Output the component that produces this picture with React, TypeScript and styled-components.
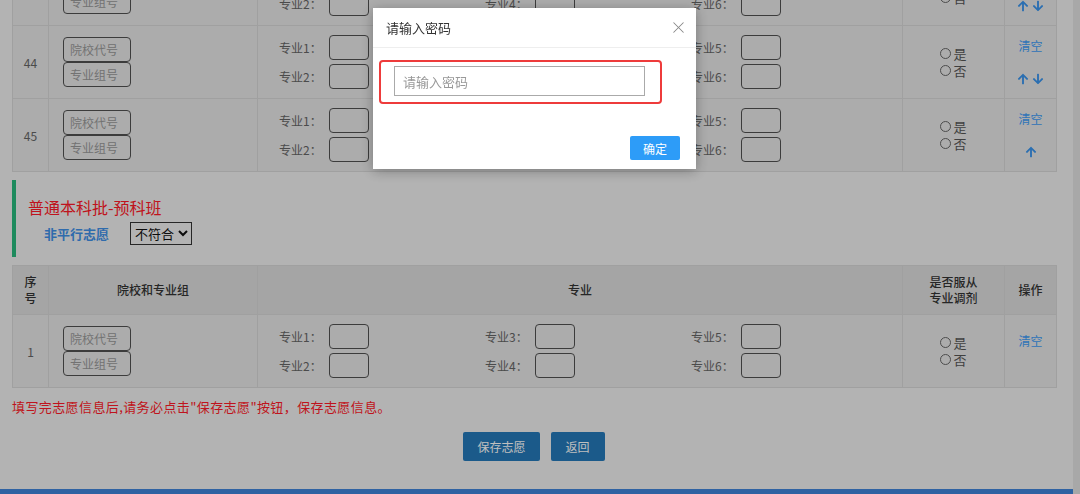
import React, { useLayoutEffect, useRef } from "react";
import styled, { createGlobalStyle } from "styled-components";
import { FaArrowUp, FaArrowDown } from "react-icons/fa";
import { X } from "lucide-react";

const GlobalStyle = createGlobalStyle`
  html, body { margin: 0; padding: 0; height: 100%; overflow: hidden; }
  body {
    font-family: "Noto Sans CJK SC", "Liberation Sans", sans-serif;
    font-size: 12px;
    color: #333;
  }
  * { box-sizing: border-box; }
`;

const Frame = styled.div`
  display: flex;
  height: 100vh;
  background: #efefef;
`;

const Viewport = styled.div`
  flex: 1;
  overflow: hidden;
`;

const ScrollTrack = styled.div`
  width: 7px;
  background: #e0e0e0;
`;

const Container = styled.div`
  padding: 0 17px 0 12px;
`;

const Table = styled.table`
  width: 100%;
  border-collapse: collapse;
  table-layout: fixed;
  background: #e6e6e6;
`;

const Th = styled.th`
  height: 49px;
  background: #dcdcdc;
  border: 1px solid #d6d6d6;
  font-size: 12px;
  line-height: 16px;
  font-weight: 500;
  color: #333;
  text-align: center;
`;

const Td = styled.td<{ $align?: "left" | "center"; $pad?: string }>`
  height: 73px;
  border: 1px solid #d6d6d6;
  text-align: ${(p) => p.$align || "center"};
  padding: ${(p) => p.$pad || "0"};
  vertical-align: middle;
  color: #646464;
  font-size: 12px;
`;

const CodeStack = styled.div`
  display: flex;
  flex-direction: column;
  width: 68px;
`;

const CodeInput = styled.input`
  display: block;
  width: 68px;
  height: 25px;
  border: 1px solid #505050;
  border-radius: 4px;
  background: transparent;
  padding: 0 6px;
  font-family: inherit;
  font-size: 12px;
  &::placeholder { color: #999; }
`;

const MajorGrid = styled.div`
  display: flex;
`;

const MajorGroup = styled.div`
  width: 206px;
  display: flex;
  flex-direction: column;
  gap: 4px;
`;

const MajorLine = styled.div`
  display: flex;
  align-items: center;
`;

const MajorLabel = styled.span`
  width: 50px;
  color: #646464;
  font-size: 12px;
`;

const MajorInput = styled.input`
  width: 40px;
  height: 25px;
  border: 1px solid #505050;
  border-radius: 4px;
  background: transparent;
`;

const RadioLine = styled.label`
  display: flex;
  justify-content: center;
  align-items: center;
  height: 17px;
  gap: 2px;
  color: #555;
  font-size: 13px;
`;

const Radio = styled.input`
  appearance: none;
  width: 11px;
  height: 11px;
  margin: 0;
  border: 1px solid #666;
  border-radius: 50%;
  background: transparent;
`;

const ClearLink = styled.a`
  display: block;
  color: #3f9cf5;
  font-size: 12px;
  line-height: 16px;
  text-decoration: none;
`;

const ArrowRow = styled.div<{ $empty?: boolean }>`
  display: flex;
  justify-content: center;
  gap: 3px;
  height: 16px;
  align-items: center;
  margin-top: ${(p) => (p.$empty ? "4px" : "17px")};
  color: #3a94ec;
`;

const SectionHead = styled.div`
  margin: 8px 0;
  border-left: 4px solid #29b87d;
  padding: 16px 0 12px 12px;
`;

const SectionTitle = styled.div`
  color: #ff1a28;
  font-size: 16px;
  line-height: 22px;
`;

const FilterRow = styled.div`
  display: flex;
  align-items: center;
  gap: 21px;
  margin-top: 4px;
  padding-left: 16px;
`;

const FilterLabel = styled.span`
  color: #3f8fe6;
  font-weight: bold;
  font-size: 13px;
`;

const FilterSelect = styled.select`
  font-family: inherit;
  font-size: 13px;
  padding: 0;
  border: 1px solid #333;
  border-radius: 0;
  background: transparent;
  color: #111;
`;

const Warning = styled.p`
  margin: 9px 0 0;
  color: #ff1a28;
  font-size: 13px;
  line-height: 20px;
  letter-spacing: 0.4px;
`;

const ButtonBar = styled.div`
  display: flex;
  justify-content: center;
  gap: 11px;
  margin: 15px 0 28px;
`;

const ActionButton = styled.button`
  height: 29px;
  min-width: 54px;
  padding: 0 14px;
  border: none;
  border-radius: 2px;
  background: #2478b8;
  color: #fff;
  font-family: inherit;
  font-size: 12px;
`;

const Footer = styled.div`
  height: 40px;
  background: #3f83d9;
`;

const Overlay = styled.div`
  position: fixed;
  inset: 0;
  background: rgba(0, 0, 0, 0.25);
`;

const Dialog = styled.div`
  position: fixed;
  left: 373px;
  top: 8px;
  width: 323px;
  background: #fff;
  box-shadow: 0 2px 12px rgba(0, 0, 0, 0.3);
`;

const DialogHead = styled.div`
  height: 40px;
  display: flex;
  align-items: center;
  justify-content: space-between;
  padding: 0 8px 0 13px;
  border-bottom: 1px solid #eee;
  font-size: 13px;
  color: #333;
`;

const CloseButton = styled.span`
  display: flex;
  color: #888;
`;

const DialogBody = styled.div`
  padding: 12px 0 0 6px;
`;

const Highlight = styled.div`
  width: 283px;
  height: 44px;
  border: 2px solid #ee3b3b;
  border-radius: 4px;
  padding: 4px 0 0 13px;
`;

const PasswordInput = styled.input`
  width: 251px;
  height: 30px;
  border: 1px solid #aaa;
  padding: 0 8px;
  font-family: inherit;
  font-size: 13px;
  &::placeholder { color: #999; }
`;

const DialogFoot = styled.div`
  display: flex;
  justify-content: flex-end;
  padding: 32px 16px 9px;
`;

const ConfirmButton = styled.button`
  width: 50px;
  height: 24px;
  border: none;
  border-radius: 2px;
  background: #2d9cf8;
  color: #fff;
  font-family: inherit;
  font-size: 12px;
`;

type Row = { no: number; up: boolean; down: boolean };

const Colgroup = () => (
  <colgroup>
    <col style={{ width: 36 }} />
    <col style={{ width: 209 }} />
    <col style={{ width: 645 }} />
    <col style={{ width: 102 }} />
    <col style={{ width: 52 }} />
  </colgroup>
);

const Head = () => (
  <thead>
    <tr>
      <Th>序<br />号</Th>
      <Th>院校和专业组</Th>
      <Th>专业</Th>
      <Th>是否服从<br />专业调剂</Th>
      <Th>操作</Th>
    </tr>
  </thead>
);

const VolunteerRow = ({ row, anchor }: { row: Row; anchor?: React.Ref<HTMLTableRowElement> }) => {
  const empty = !row.up && !row.down;
  return (
    <tr ref={anchor}>
      <Td>{row.no}</Td>
      <Td $align="left" $pad="0 0 0 14px">
        <CodeStack>
          <CodeInput placeholder="院校代号" />
          <CodeInput placeholder="专业组号" />
        </CodeStack>
      </Td>
      <Td $align="left" $pad="0 0 0 21px">
        <MajorGrid>
          {[[1, 2], [3, 4], [5, 6]].map((pair) => (
            <MajorGroup key={pair[0]}>
              {pair.map((n) => (
                <MajorLine key={n}>
                  <MajorLabel>专业{n}：</MajorLabel>
                  <MajorInput />
                </MajorLine>
              ))}
            </MajorGroup>
          ))}
        </MajorGrid>
      </Td>
      <Td>
        <RadioLine><Radio type="radio" name={`adj${row.no}`} />是</RadioLine>
        <RadioLine><Radio type="radio" name={`adj${row.no}`} />否</RadioLine>
      </Td>
      <Td>
        <ClearLink>清空</ClearLink>
        <ArrowRow $empty={empty}>
          {row.up && <FaArrowUp size={12} />}
          {row.down && <FaArrowDown size={12} />}
        </ArrowRow>
      </Td>
    </tr>
  );
};

const regularRows: Row[] = [
  { no: 42, up: true, down: true },
  { no: 43, up: true, down: true },
  { no: 44, up: true, down: true },
  { no: 45, up: true, down: false },
];

export default function App() {
  const viewRef = useRef<HTMLDivElement>(null);
  const anchorRef = useRef<HTMLTableRowElement>(null);

  useLayoutEffect(() => {
    const v = viewRef.current;
    const a = anchorRef.current;
    if (!v || !a) return;
    v.scrollTop = a.getBoundingClientRect().top - v.getBoundingClientRect().top - 26;
  }, []);

  return (
    <>
      <GlobalStyle />
      <Frame>
        <Viewport ref={viewRef}>
          <Container>
            <Table>
              <Colgroup />
              <Head />
              <tbody>
                {regularRows.map((r) => (
                  <VolunteerRow key={r.no} row={r} anchor={r.no === 44 ? anchorRef : undefined} />
                ))}
              </tbody>
            </Table>

            <SectionHead>
              <SectionTitle>普通本科批-预科班</SectionTitle>
              <FilterRow>
                <FilterLabel>非平行志愿</FilterLabel>
                <FilterSelect defaultValue="no">
                  <option value="no">不符合</option>
                  <option value="yes">符合</option>
                </FilterSelect>
              </FilterRow>
            </SectionHead>

            <Table>
              <Colgroup />
              <Head />
              <tbody>
                <VolunteerRow row={{ no: 1, up: false, down: false }} />
              </tbody>
            </Table>

            <Warning>填写完志愿信息后,请务必点击"保存志愿"按钮，保存志愿信息。</Warning>
            <ButtonBar>
              <ActionButton>保存志愿</ActionButton>
              <ActionButton>返回</ActionButton>
            </ButtonBar>
          </Container>
          <Footer />
        </Viewport>
        <ScrollTrack />
      </Frame>

      <Overlay />
      <Dialog>
        <DialogHead>
          <span>请输入密码</span>
          <CloseButton><X size={19} strokeWidth={1.3} /></CloseButton>
        </DialogHead>
        <DialogBody>
          <Highlight>
            <PasswordInput type="password" placeholder="请输入密码" />
          </Highlight>
        </DialogBody>
        <DialogFoot>
          <ConfirmButton>确定</ConfirmButton>
        </DialogFoot>
      </Dialog>
    </>
  );
}
